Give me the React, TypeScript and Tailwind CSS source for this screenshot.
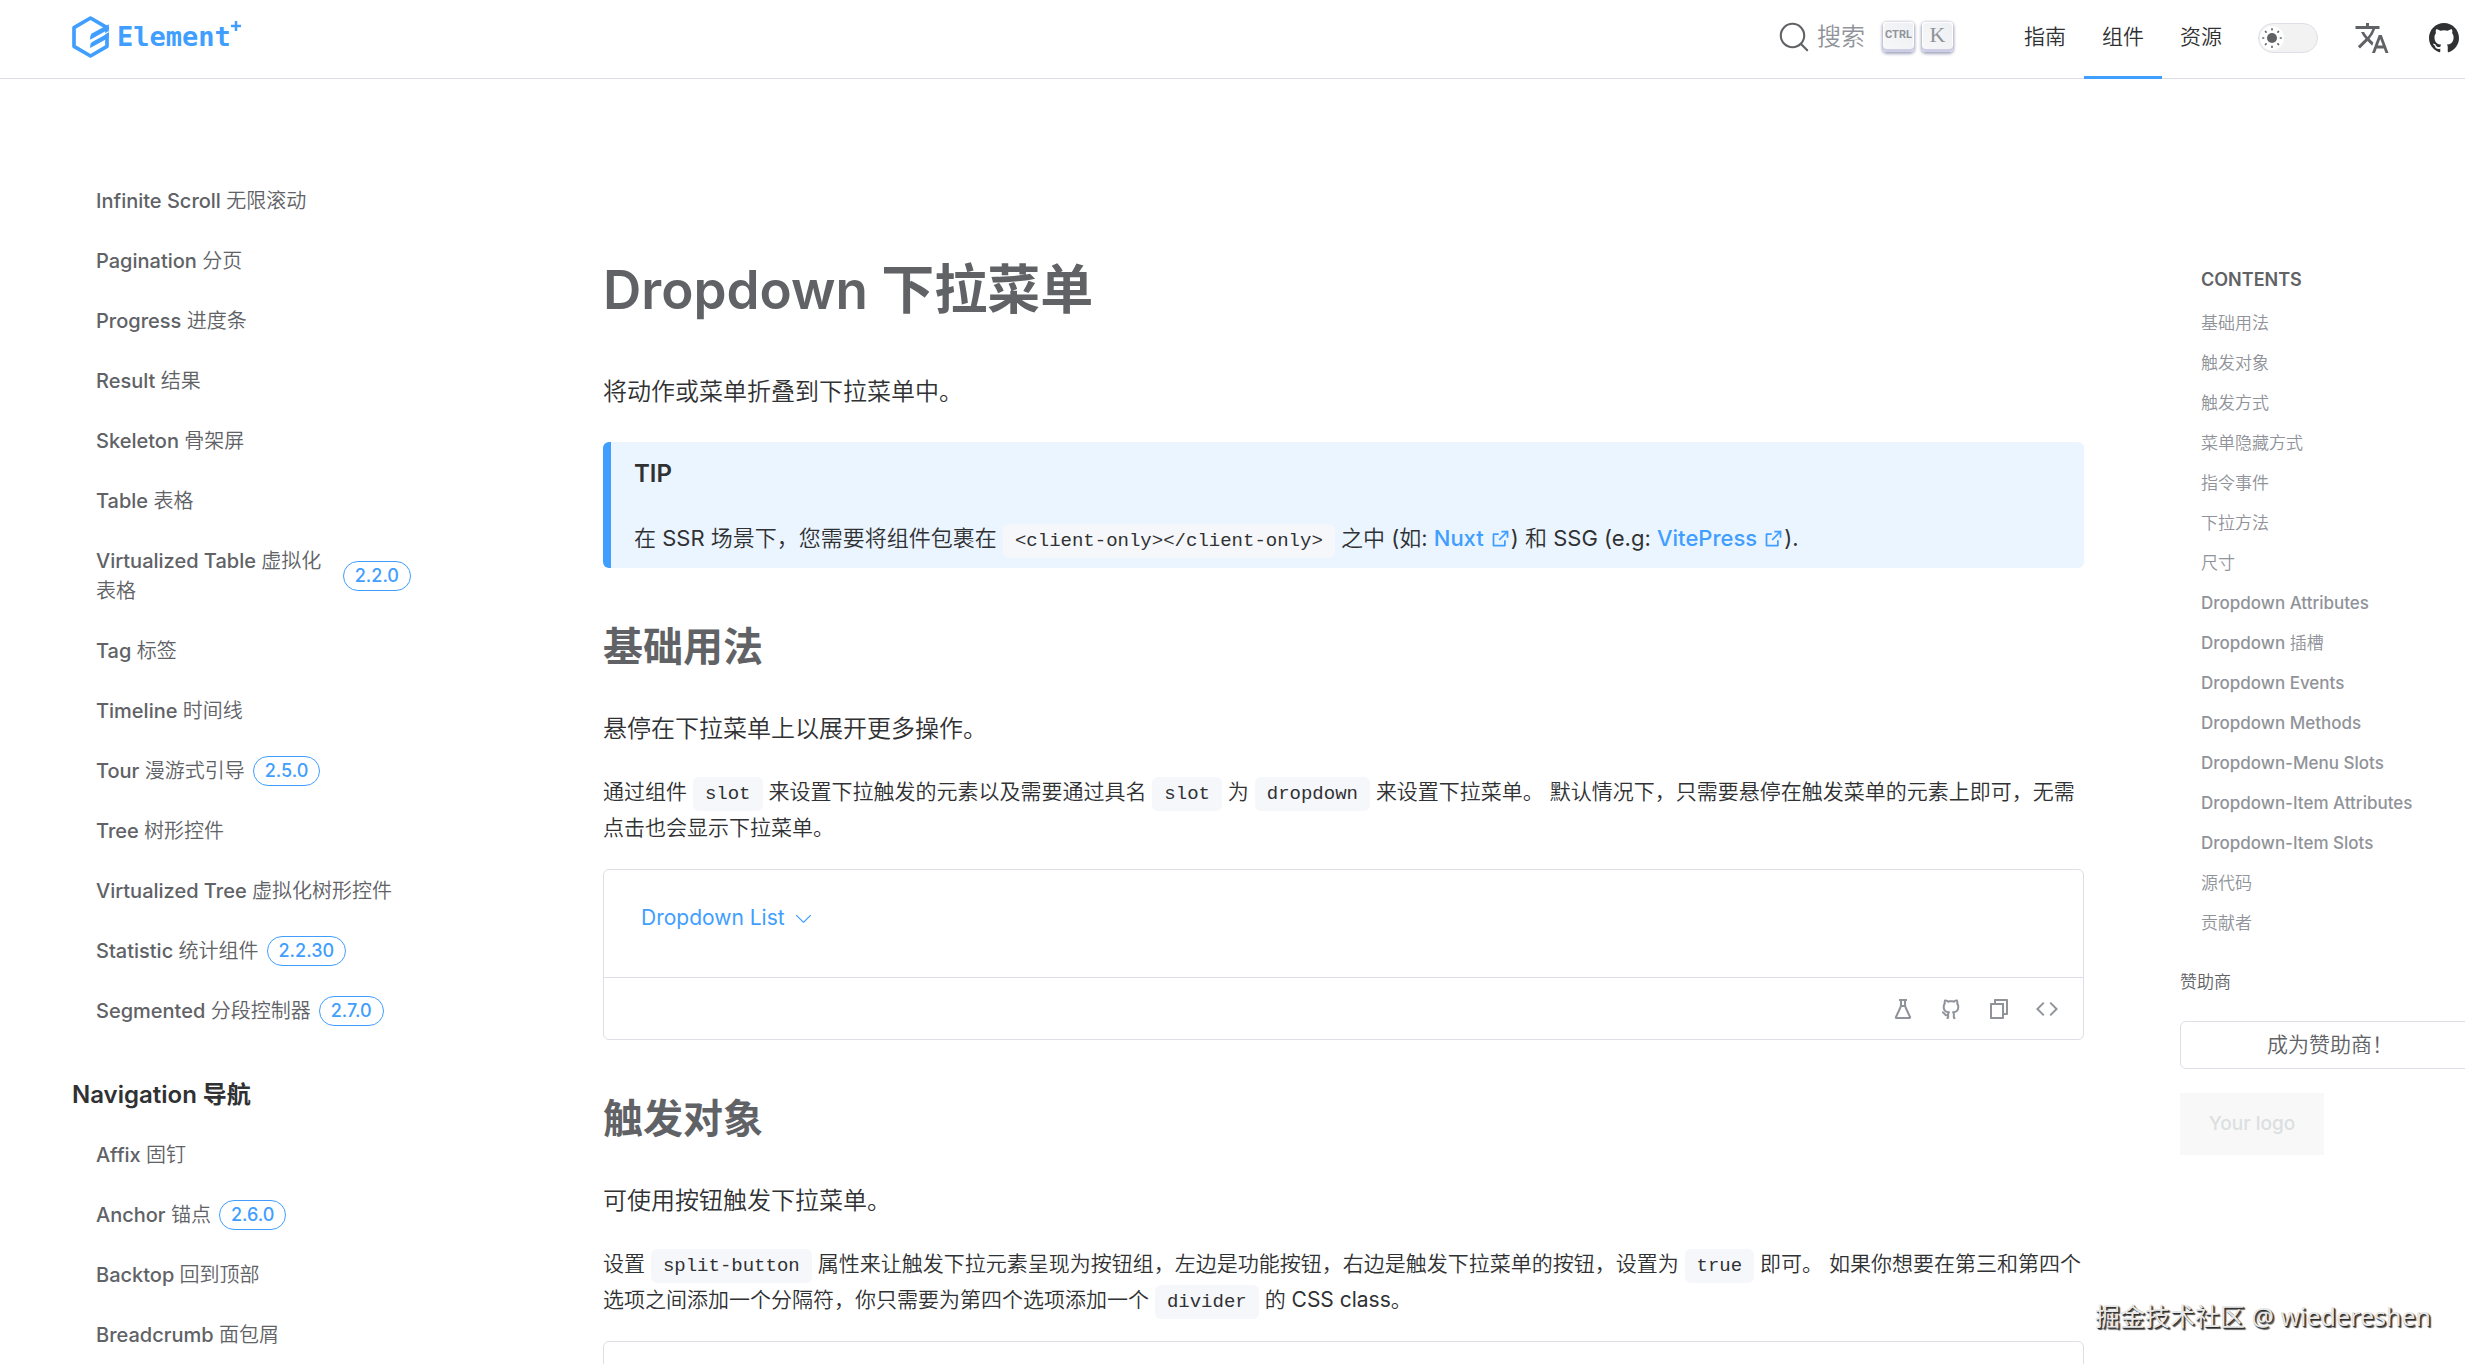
import React from "react";
import {
  RiCodeLine,
  RiExternalLinkLine,
  RiFileCopyLine,
  RiFlaskLine,
  RiGithubFill,
  RiGithubLine,
} from "react-icons/ri";
import { MdTranslate } from "react-icons/md";

type NavItem = { label: string; badge?: string };

const dataItems: NavItem[] = [
  { label: "Infinite Scroll 无限滚动" },
  { label: "Pagination 分页" },
  { label: "Progress 进度条" },
  { label: "Result 结果" },
  { label: "Skeleton 骨架屏" },
  { label: "Table 表格" },
  { label: "Virtualized Table 虚拟化表格", badge: "2.2.0" },
  { label: "Tag 标签" },
  { label: "Timeline 时间线" },
  { label: "Tour 漫游式引导", badge: "2.5.0" },
  { label: "Tree 树形控件" },
  { label: "Virtualized Tree 虚拟化树形控件" },
  { label: "Statistic 统计组件", badge: "2.2.30" },
  { label: "Segmented 分段控制器", badge: "2.7.0" },
];

const navigationItems: NavItem[] = [
  { label: "Affix 固钉" },
  { label: "Anchor 锚点", badge: "2.6.0" },
  { label: "Backtop 回到顶部" },
  { label: "Breadcrumb 面包屑" },
];

const contents = [
  "基础用法",
  "触发对象",
  "触发方式",
  "菜单隐藏方式",
  "指令事件",
  "下拉方法",
  "尺寸",
  "Dropdown Attributes",
  "Dropdown 插槽",
  "Dropdown Events",
  "Dropdown Methods",
  "Dropdown-Menu Slots",
  "Dropdown-Item Attributes",
  "Dropdown-Item Slots",
  "源代码",
  "贡献者",
];

const menus = ["指南", "组件", "资源"];

function Logo() {
  return (
    <a href="#" aria-label="Element Plus" className="flex h-[42px] items-center text-[#409eff]">
      <svg viewBox="96 48 110 126" className="h-[42px] w-[37px]" aria-hidden="true">
        <path
          d="M151 54 L200.500 83 V139 L151 168 L101.500 139 V83 Z"
          fill="none"
          stroke="currentColor"
          strokeWidth="11"
          strokeLinejoin="round"
        />
        <path d="M150 112 Q150 104 156 100 L206 73 V88 L150 119 Z" fill="currentColor" />
        <path d="M150 137 Q150 130 156 126 L206 98 V113 L150 144 Z" fill="currentColor" />
        <path d="M176 110 L206 93 V97 L176 114 Z" fill="#fff" />
      </svg>
      <span className="ml-2 flex items-start font-['DejaVu_Sans_Mono',monospace] text-[27px] leading-8 font-bold">
        Element
        <svg viewBox="0 0 10 10" className="h-2.5 w-2.5" aria-hidden="true">
          <path d="M5 0v10M0 5h10" stroke="currentColor" strokeWidth="2.500" />
        </svg>
      </span>
    </a>
  );
}

function SunIcon() {
  return (
    <svg viewBox="0 0 24 24" className="h-5 w-5 text-[#606266]" aria-hidden="true">
      <circle cx="12" cy="12" r="6" fill="currentColor" />
      <path
        d="M12 1v1M12 22v1M1 12h1M22 12h1M4.200 4.200l.7.7M19.100 19.100l.7.7M4.200 19.800l.7-.7M19.100 4.900l.7-.7"
        stroke="currentColor"
        strokeWidth="2"
        strokeLinecap="round"
      />
    </svg>
  );
}

function Key({ children }: { children: React.ReactNode }) {
  return (
    <kbd className="flex h-[30px] w-[31px] items-center justify-center rounded-[4px] bg-linear-to-bl from-[#eceff3] to-[#f8f8f8] pb-1 text-[#909399] shadow-[inset_0_-3px_0_0_#cdcde6,inset_0_0_1px_1px_#fff,0_1px_3px_1px_rgba(30,35,90,0.4)]">
      {children}
    </kbd>
  );
}

function Header() {
  return (
    <header className="flex h-[79px] items-stretch border-b border-[#dcdfe6] pr-[3px] pl-[72px]">
      <div className="flex items-center pb-1">
        <Logo />
      </div>
      <button type="button" className="ml-auto flex items-center gap-2 pb-1 text-[#909399]">
        <svg viewBox="0 0 20 20" className="h-[30px] w-[30px] text-[#606266]" aria-hidden="true">
          <circle cx="9" cy="9" r="7.800" fill="none" stroke="currentColor" strokeWidth="1.400" />
          <path d="M14.500 14.500 18.800 18.800" stroke="currentColor" strokeWidth="1.400" strokeLinecap="round" />
        </svg>
        <span className="text-2xl">搜索</span>
        <span className="ml-2.5 flex gap-2">
          <Key>
            <span className="font-['Roboto',sans-serif] text-[11px] font-bold">CTRL</span>
          </Key>
          <Key>
            <span className="font-['Liberation_Serif',serif] text-[22px] leading-6">K</span>
          </Key>
        </span>
      </button>
      <nav className="ml-[53px] flex">
        {menus.map((menu) => (
          <a
            key={menu}
            href="#"
            aria-current={menu === "组件" ? "page" : undefined}
            className={
              menu === "组件"
                ? "-mb-px flex items-center border-b-3 border-[#409eff] px-[18px] pb-0.5 text-[21px] text-[#303133]"
                : "-mb-px flex items-center border-b-3 border-transparent px-[18px] pb-0.5 text-[21px] text-[#303133]"
            }
          >
            {menu}
          </a>
        ))}
      </nav>
      <div className="ml-[18px] flex items-center gap-9 pb-0.5">
        <button
          type="button"
          role="switch"
          aria-checked="false"
          aria-label="切换主题"
          className="flex h-[30px] w-[60px] items-center rounded-full border border-[#dcdfe6] bg-[#f2f2f2] p-px"
        >
          <span className="flex h-6 w-6 items-center justify-center rounded-full bg-white">
            <SunIcon />
          </span>
        </button>
        <button type="button" aria-label="语言">
          <MdTranslate className="h-9 w-9 text-[#606266]" />
        </button>
        <a href="#" aria-label="GitHub">
          <RiGithubFill className="h-9 w-9 text-[#303133]" />
        </a>
      </div>
    </header>
  );
}

function SidebarList({ items }: { items: NavItem[] }) {
  return (
    <ul className="pl-6">
      {items.map((item) => (
        <li key={item.label}>
          <a href="#" className="flex items-center py-[15px] text-xl leading-[30px] font-medium text-[#606266]">
            <span>{item.label}</span>
            {item.badge && (
              <span className="ml-2 flex h-[30px] shrink-0 items-center rounded-full border border-[#409eff] px-[11px] text-lg text-[#409eff]">
                {item.badge}
              </span>
            )}
          </a>
        </li>
      ))}
    </ul>
  );
}

function Sidebar() {
  return (
    <aside className="w-[411px] shrink-0 pt-[92px] pl-[72px]">
      <SidebarList items={dataItems} />
      <h2 className="mt-6 py-[15px] font-['Inter','Noto_Sans_CJK_SC',sans-serif] text-2xl leading-[30px] font-semibold text-[#303133]">
        Navigation 导航
      </h2>
      <SidebarList items={navigationItems} />
    </aside>
  );
}

function Code({ children }: { children: React.ReactNode }) {
  return (
    <code className="rounded-md bg-[#f5f7fa] px-3 py-1.5 font-['Liberation_Mono',monospace] text-[19px] leading-5">
      {children}
    </code>
  );
}

function ExternalLink({ children }: { children: React.ReactNode }) {
  return (
    <a href="#" className="font-medium text-[#409eff]">
      {children}
      <RiExternalLinkLine className="ml-1.5 inline h-[21px] w-[21px] align-[-3px]" />
    </a>
  );
}

function Demo({ label }: { label?: string }) {
  return (
    <div className="mt-[23px] rounded-md border border-[#dcdfe6]">
      <div className="h-[108px] border-b border-[#dcdfe6] px-[37px] pt-8">
        {label && (
          <button type="button" className="flex items-center gap-2 text-[21px] leading-8 text-[#409eff]">
            {label}
            <svg viewBox="0 0 1024 1024" className="h-[21px] w-[21px]" aria-hidden="true">
              <path
                fill="currentColor"
                d="M831.872 340.864 512 652.672 192.128 340.864a30.592 30.592 0 0 0-42.752 0 29.120 29.120 0 0 0 0 41.600L489.664 714.240a32 32 0 0 0 44.672 0l340.288-331.712a29.120 29.120 0 0 0 0-41.728 30.592 30.592 0 0 0-42.752 0z"
              />
            </svg>
          </button>
        )}
      </div>
      <div className="flex h-[61px] items-center justify-end gap-6 px-6 text-[#909399]">
        <button type="button" aria-label="在 Playground 中编辑">
          <RiFlaskLine className="h-6 w-6" />
        </button>
        <button type="button" aria-label="在 GitHub 中编辑">
          <RiGithubLine className="h-6 w-6" />
        </button>
        <button type="button" aria-label="复制代码">
          <RiFileCopyLine className="h-6 w-6" />
        </button>
        <button type="button" aria-label="查看源代码">
          <RiCodeLine className="h-6 w-6" />
        </button>
      </div>
    </div>
  );
}

type SectionProps = { title: string; lead: string; demoLabel?: string; children: React.ReactNode };

function Section({ title, lead, demoLabel, children }: SectionProps) {
  return (
    <section className="pt-[55px]">
      <h2 className="font-['Inter','Noto_Sans_CJK_SC',sans-serif] text-[40px] leading-[48px] font-bold text-[#606266]">
        {title}
      </h2>
      <p className="mt-[38px] text-2xl leading-10 text-[#303133]">{lead}</p>
      <p className="mt-[25px] text-[21px] leading-9 text-[#303133]">{children}</p>
      <Demo label={demoLabel} />
    </section>
  );
}

function Article() {
  return (
    <main className="ml-48 min-w-0 flex-1 pt-[177px]">
      <h1 className="font-['Inter','Noto_Sans_CJK_SC',sans-serif] text-[53px] leading-[68px] font-semibold text-[#606266]">
        Dropdown 下拉菜单
      </h1>
      <p className="mt-12 text-2xl leading-10 text-[#303133]">将动作或菜单折叠到下拉菜单中。</p>
      <div className="mt-[30px] rounded-md border-l-8 border-[#409eff] bg-[#ebf5ff] pt-3 pb-2.5 pl-[23px]">
        <p className="text-2xl leading-10 font-semibold text-[#303133]">TIP</p>
        <p className="mt-6 text-[22px] leading-10 text-[#303133]">
          在 SSR 场景下，您需要将组件包裹在 <Code>&lt;client-only&gt;&lt;/client-only&gt;</Code> 之中 (如:{" "}
          <ExternalLink>Nuxt</ExternalLink>) 和 SSG (e.g: <ExternalLink>VitePress</ExternalLink>).
        </p>
      </div>
      <Section title="基础用法" lead="悬停在下拉菜单上以展开更多操作。" demoLabel="Dropdown List">
        通过组件 <Code>slot</Code> 来设置下拉触发的元素以及需要通过具名 <Code>slot</Code> 为 <Code>dropdown</Code>{" "}
        来设置下拉菜单。 默认情况下，只需要悬停在触发菜单的元素上即可，无需点击也会显示下拉菜单。
      </Section>
      <Section title="触发对象" lead="可使用按钮触发下拉菜单。">
        设置 <Code>split-button</Code> 属性来让触发下拉元素呈现为按钮组，左边是功能按钮，右边是触发下拉菜单的按钮，设置为{" "}
        <Code>true</Code> 即可。 如果你想要在第三和第四个选项之间添加一个分隔符，你只需要为第四个选项添加一个{" "}
        <Code>divider</Code> 的 CSS class。
      </Section>
    </main>
  );
}

function Contents() {
  return (
    <aside className="ml-24 w-[285px] shrink-0 pt-[186px]">
      <nav className="pl-[21px]" aria-label="Contents">
        <h2 className="text-lg leading-[30px] font-semibold text-[#606266]">CONTENTS</h2>
        <ul className="mt-2">
          {contents.map((item) => (
            <li key={item} className="h-10 text-[17px] leading-10 font-medium text-[#909399]">
              <a href="#">{item}</a>
            </li>
          ))}
        </ul>
      </nav>
      <p className="mt-6 text-[17px] leading-[30px] text-[#606266]">赞助商</p>
      <a
        href="#"
        className="mt-6 flex h-12 w-[300px] items-center justify-center rounded-md border border-[#dcdfe6] text-[21px] text-[#606266]"
      >
        成为赞助商！
      </a>
      <a
        href="#"
        className="mt-6 flex h-[62px] w-36 items-center justify-center bg-[#f8f8f8] text-[19px] font-medium text-[#dcdfe0]"
      >
        Your logo
      </a>
    </aside>
  );
}

export default function App() {
  return (
    <div className="relative h-screen overflow-hidden bg-white font-['Inter','Noto_Sans_CJK_SC_DemiLight','Noto_Sans_CJK_SC',sans-serif]">
      <Header />
      <div className="flex">
        <Sidebar />
        <Article />
        <Contents />
      </div>
      <p className="absolute right-[34px] bottom-7 font-['Noto_Sans','Noto_Sans_CJK_SC',sans-serif] text-[25px] leading-10 text-[#e8e8e8] [text-shadow:1px_1px_1px_#222,2px_2px_1px_#555]">
        掘金技术社区 @ wiedereshen
      </p>
    </div>
  );
}
